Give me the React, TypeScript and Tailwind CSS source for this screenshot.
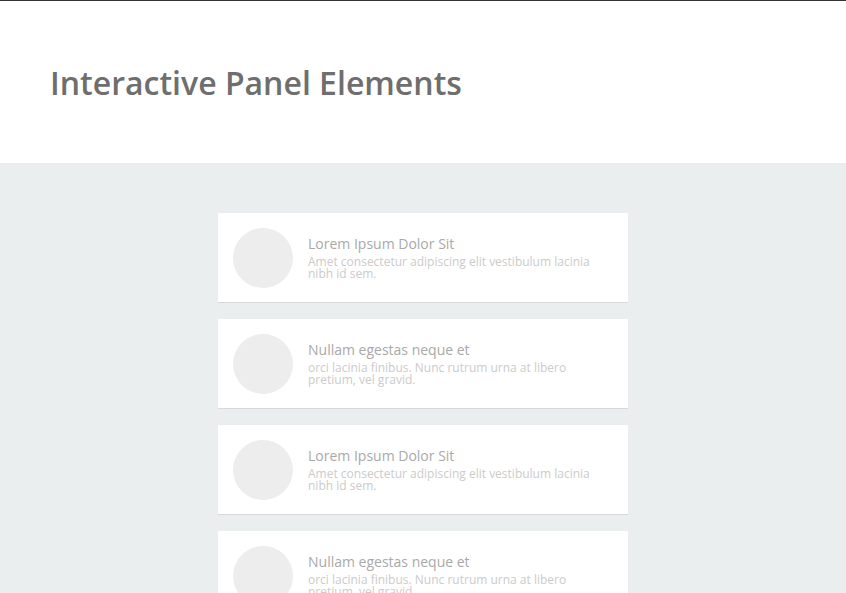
import React from 'react'

const items = [
  { title: 'Lorem Ipsum Dolor Sit', text: 'Amet consectetur adipiscing elit vestibulum lacinia nibh id sem.' },
  { title: 'Nullam egestas neque et', text: 'orci lacinia finibus. Nunc rutrum urna at libero pretium, vel gravid.' },
  { title: 'Lorem Ipsum Dolor Sit', text: 'Amet consectetur adipiscing elit vestibulum lacinia nibh id sem.' },
  { title: 'Nullam egestas neque et', text: 'orci lacinia finibus. Nunc rutrum urna at libero pretium, vel gravid.' },
]

export default function App() {
  return (
    <div className="h-[593px] overflow-hidden font-['Open_Sans',sans-serif]">
      <header className="h-[163px] border-t border-[#333] bg-white pl-[50px] pt-[62px]">
        <h1 className="text-[32px] font-semibold leading-[40px] text-[#6e6e6e]">Interactive Panel Elements</h1>
      </header>

      <section className="flex flex-col items-center gap-4 bg-[#ebeeef] pt-[50px] pb-10">
        {items.map((item, i) => (
          <div key={i} className="flex h-[90px] w-[410px] items-center border-b border-[#d6d8d9] bg-white px-[15px]">
            <div className="h-[60px] w-[60px] shrink-0 rounded-full bg-[#ededed]" />
            <div className="mb-[2px] ml-[15px] pr-2">
              <div className="text-[14px] leading-[20px] text-[#a9a9a9]">{item.title}</div>
              <p className="mt-[2px] text-[12px] leading-[12px] text-[#cbcbcb]">{item.text}</p>
            </div>
          </div>
        ))}
      </section>
    </div>
  )
}
